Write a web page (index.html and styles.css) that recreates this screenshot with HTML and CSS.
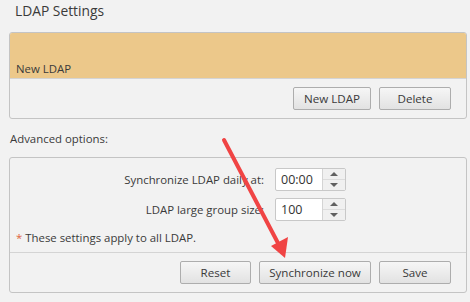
FILE: index.html
```html
<!DOCTYPE html>
<html lang="en">
<head>
    <meta charset="UTF-8">
    <meta name="viewport" content="width=device-width, initial-scale=1.0">
    <title>LDAP Settings</title>
    <link rel="stylesheet" href="styles.css">
</head>
<body>
    <div class="page">
        <h2 class="title">LDAP Settings</h2>

        <!-- LDAP list -->
        <div class="panel">
            <div class="ldap-item">New LDAP</div>
            <div class="btn-row">
                <button class="btn btn-new">New LDAP</button>
                <button class="btn btn-delete">Delete</button>
            </div>
        </div>

        <div class="section-label">Advanced options:</div>

        <!-- Advanced options -->
        <div class="panel">
            <div class="options">
                <div class="form-grid">
                    <label class="opt-label">Synchronize LDAP daily at:</label>
                    <div class="spin">
                        <span class="spin-value">00:00</span>
                        <span class="spin-btns"><span class="up"></span><span class="down"></span></span>
                    </div>
                    <label class="opt-label">LDAP large group size:</label>
                    <div class="spin">
                        <span class="spin-value">100</span>
                        <span class="spin-btns"><span class="up"></span><span class="down"></span></span>
                    </div>
                </div>
                <p class="note"><span class="star">*</span> These settings apply to all LDAP.</p>
            </div>
            <div class="btn-row">
                <button class="btn btn-reset">Reset</button>
                <button class="btn btn-sync">Synchronize now</button>
                <button class="btn btn-save">Save</button>
            </div>
        </div>

        <!-- Annotation arrow -->
        <svg class="arrow" width="470" height="302" viewBox="0 0 470 302">
            <line x1="224" y1="140" x2="279" y2="245" stroke="#f04444" stroke-width="4" stroke-linecap="round"/>
            <polygon points="285,258 271,246 288,237" fill="#f04444"/>
        </svg>
    </div>
</body>
</html>
```

FILE: styles.css
```css
/* Base */
body {
    margin: 0;
    background-color: #f2f2f2;
    font-family: 'Segoe UI', 'Open Sans', 'Noto Sans', sans-serif;
    font-size: 11.4px;
    color: #3a3a3a;
}

.page {
    position: relative;
    width: 470px;
    height: 302px;
    padding: 0 3px 0 9px;
    box-sizing: border-box;
}

.title {
    margin: 0;
    height: 32px;
    padding-left: 6px;
    font-size: 13.8px;
    font-weight: normal;
    line-height: 22px;
    color: #3a3a3a;
}

/* Panels */
.panel {
    border: 1px solid #c4c4c4;
    border-radius: 3px;
    background-color: #f2f2f2;
    overflow: hidden;
}

.ldap-item {
    height: 46px;
    box-sizing: border-box;
    padding: 26px 6px 0;
    background-color: #ecc88a;
    border-bottom: 1px solid #d4d4d4;
    line-height: 20px;
}

.btn-row {
    display: flex;
    justify-content: flex-end;
    gap: 8px;
    padding: 8px 15px 8px 0;
}

/* Buttons */
.btn {
    height: 23px;
    padding: 0;
    border: 1px solid #adadad;
    border-radius: 2px;
    background: linear-gradient(#f6f6f6, #e2e2e2);
    font-family: inherit;
    font-size: 11.6px;
    color: #3a3a3a;
}

.btn-new { width: 78px; }
.btn-delete { width: 72px; }
.btn-reset { width: 71px; }
.btn-sync { width: 112px; }
.btn-save { width: 72px; }

.section-label {
    height: 38px;
    padding-left: 1px;
    box-sizing: border-box;
    display: flex;
    align-items: center;
}

/* Options form */
.options {
    border-bottom: 1px solid #d4d4d4;
    padding: 10px 0 0;
}

.form-grid {
    display: grid;
    grid-template-columns: 254px auto;
    column-gap: 11px;
    row-gap: 7px;
    align-items: center;
}

.opt-label {
    text-align: right;
}

.spin {
    display: flex;
    width: 71px;
    height: 23px;
    border: 1px solid #c8c8c8;
    border-radius: 2px;
    box-sizing: border-box;
    background-color: #ffffff;
}

.spin-value {
    flex: 1;
    padding-left: 5px;
    font-size: 12.5px;
    line-height: 21px;
    color: #333333;
    border-right: 1px solid #d4d4d4;
}

.spin-btns {
    display: flex;
    flex-direction: column;
    width: 22px;
    background-color: #f0f0f0;
}

.spin-btns span {
    flex: 1;
    display: flex;
    align-items: center;
    justify-content: center;
}

.spin-btns .up {
    border-bottom: 1px solid #dcdcdc;
}

.spin-btns .up:before {
    content: "";
    border-left: 4px solid transparent;
    border-right: 4px solid transparent;
    border-bottom: 4px solid #606060;
}

.spin-btns .down:before {
    content: "";
    border-left: 4px solid transparent;
    border-right: 4px solid transparent;
    border-top: 4px solid #606060;
}

.note {
    margin: 0;
    padding: 8px 6px 5px;
    line-height: 18px;
}

.star {
    color: #e0643c;
}

/* Annotation */
.arrow {
    position: absolute;
    top: 0;
    left: 0;
    pointer-events: none;
}
```
